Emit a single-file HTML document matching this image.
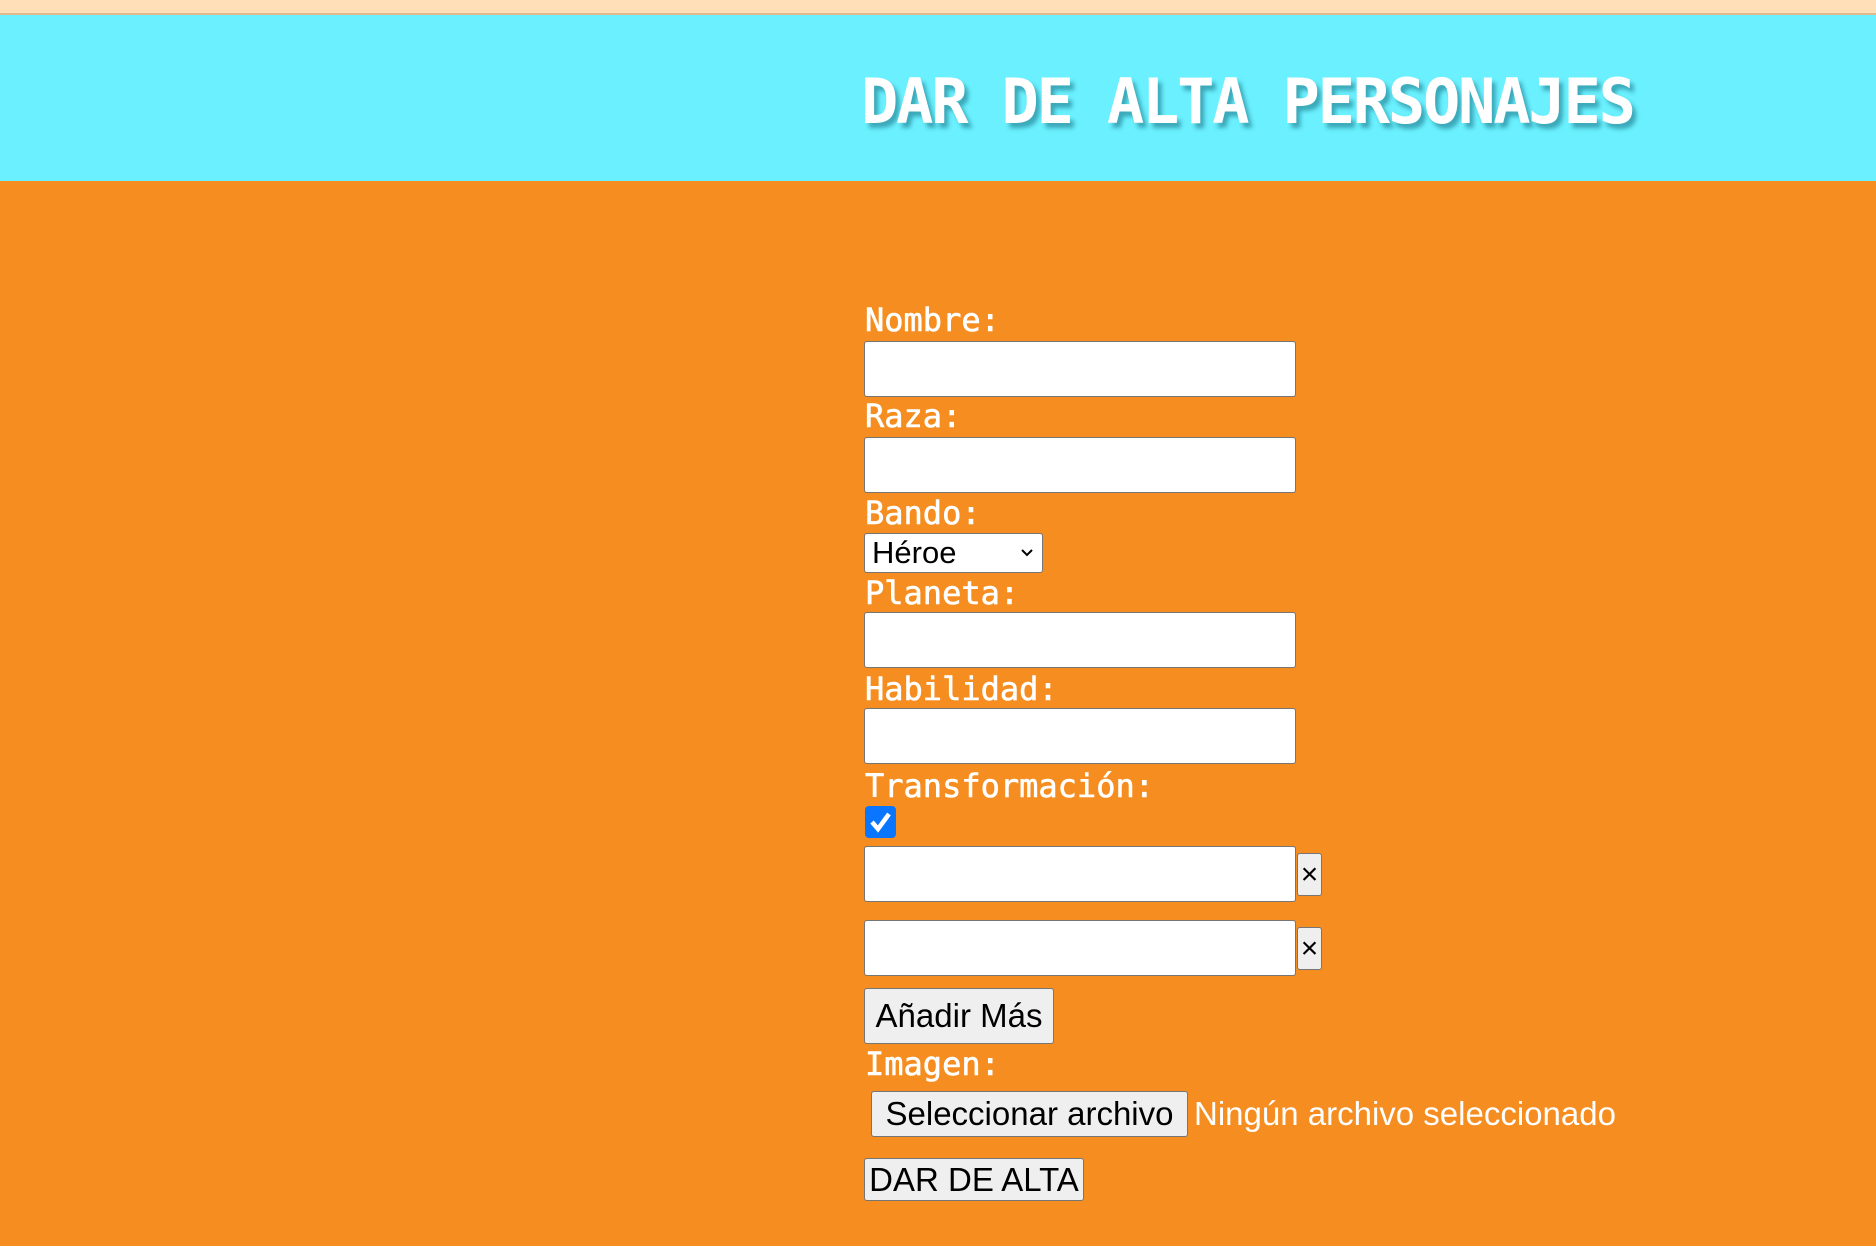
<!DOCTYPE html>
<html><head><meta charset="utf-8"><style>
*{box-sizing:border-box;margin:0;padding:0}
body{width:1876px;height:1246px;background:#f58d20;position:relative;overflow:hidden;font-family:"Liberation Sans",sans-serif}
#top{position:absolute;left:0;top:0;width:1876px;height:13px;background:#ffdfb8}
#line{position:absolute;left:0;top:13px;width:1876px;height:2px;background:#e0b890}
#head{position:absolute;left:0;top:15px;width:1876px;height:166px;background:#6af0fe}
h1{position:absolute;left:861px;top:66px;font:bold 62px "DejaVu Sans Mono",monospace;letter-spacing:-2.2px;color:#fff;text-shadow:4px 5px 4px rgba(0,80,100,.45);white-space:nowrap;line-height:72px}
.l{position:absolute;left:865px;font:32px "DejaVu Sans Mono",monospace;color:#fff;-webkit-text-stroke:.6px #fff;line-height:38px;white-space:nowrap}
.i{position:absolute;left:864px;width:432px;height:56px;background:#fff;border:1px solid #767676;border-radius:3px}
.b{position:absolute;background:#efefef;border:1px solid #767676;border-radius:3px;color:#000;font-family:"Liberation Sans",sans-serif;display:flex;align-items:center;justify-content:center;white-space:nowrap}
</style></head><body>
<div id="top"></div><div id="line"></div><div id="head"></div>
<h1>DAR DE ALTA PERSONAJES</h1>
<div class="l" style="top:301px">Nombre:</div>
<div class="i" style="top:341px"></div>
<div class="l" style="top:397px">Raza:</div>
<div class="i" style="top:437px"></div>
<div class="l" style="top:494px">Bando:</div>
<div style="position:absolute;left:864px;top:533px;width:179px;height:40px;background:#fff;border:1px solid #767676;border-radius:3px;font-size:31px;line-height:38px;padding-left:7px;color:#000">Héroe
<svg style="position:absolute;right:8px;top:14px" width="14" height="10" viewBox="0 0 14 10"><path d="M2 2 L7 7 L12 2" stroke="#000" stroke-width="2" fill="none"/></svg></div>
<div class="l" style="top:574px">Planeta:</div>
<div class="i" style="top:612px"></div>
<div class="l" style="top:670px">Habilidad:</div>
<div class="i" style="top:708px"></div>
<div class="l" style="top:767px">Transformación:</div>
<div style="position:absolute;left:865px;top:806px;width:31px;height:32px;background:#0a75ff;border-radius:4px"><svg width="31" height="32" viewBox="0 0 31 32"><path d="M7 16 L13 23 L24 8" stroke="#fff" stroke-width="4.5" fill="none"/></svg></div>
<div class="i" style="top:846px"></div>
<div class="b" style="left:1297px;top:853px;width:25px;height:43px;font-size:30px">×</div>
<div class="i" style="top:920px"></div>
<div class="b" style="left:1297px;top:927px;width:25px;height:43px;font-size:30px">×</div>
<div class="b" style="left:864px;top:988px;width:190px;height:56px;font-size:33px">Añadir Más</div>
<div class="l" style="top:1045px">Imagen:</div>
<div class="b" style="left:871px;top:1091px;width:317px;height:46px;font-size:33px">Seleccionar archivo</div>
<div style="position:absolute;left:1194px;top:1094px;font-size:33px;color:#fff;line-height:40px;white-space:nowrap">Ningún archivo seleccionado</div>
<div class="b" style="left:864px;top:1158px;width:220px;height:43px;font-size:33px">DAR DE ALTA</div>
</body></html>
